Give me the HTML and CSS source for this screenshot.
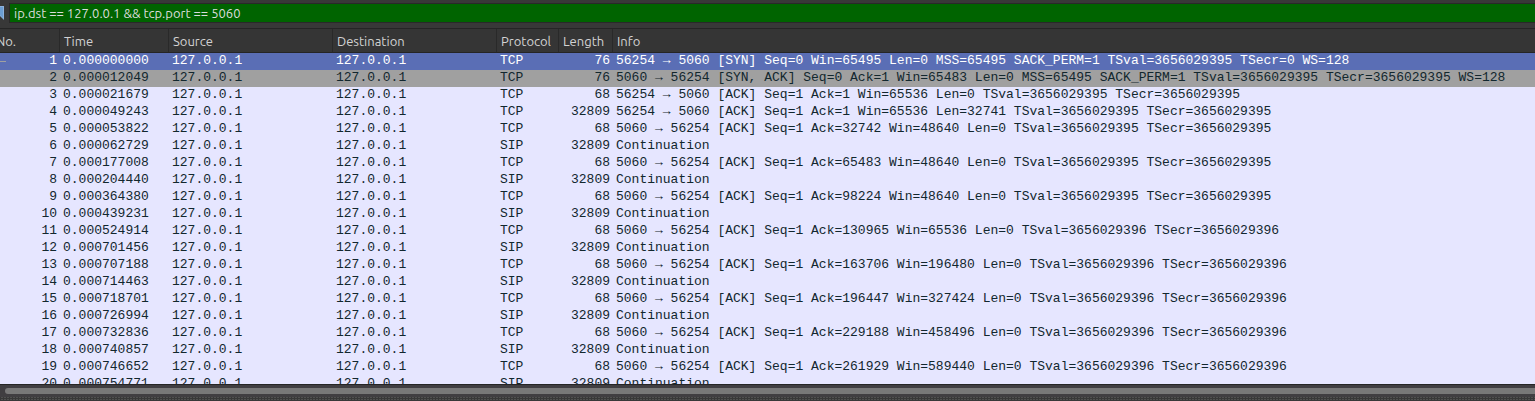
FILE: index.html
```
<!DOCTYPE html>
<html lang="en">
<head>
<meta charset="utf-8">
<title>Packet list</title>
<link rel="stylesheet" href="styles.css">
</head>
<body>
<form class="filter-bar">
  <button class="bookmark" type="button" aria-label="Filter bookmarks"><svg width="5" height="14" viewBox="0 0 5 14"><path d="M0 0H4V14L0 10Z" fill="#8db3dd"/><path d="M0 1H3V12L0 9Z" fill="#6c9fd3"/></svg></button>
  <input class="filter-input" type="text" aria-label="Display filter" spellcheck="false" value="ip.dst == 127.0.0.1 &amp;&amp; tcp.port == 5060">
</form>
<main class="packet-pane">
  <table class="packets">
    <colgroup><col class="c-no"><col class="c-time"><col class="c-addr"><col class="c-addr"><col class="c-proto"><col class="c-len"><col></colgroup>
    <thead><tr><th>No.</th><th>Time</th><th>Source</th><th>Destination</th><th>Protocol</th><th>Length</th><th>Info</th></tr></thead>
    <tbody id="rows"></tbody>
  </table>
</main>
<div class="scroll-track"><div class="scroll-thumb"></div></div>
<div class="splitter"></div>
<script src="packets.js"></script>
</body>
</html>
```
FILE: styles.css
```
* { box-sizing: border-box; }
body {
  margin: 0;
  height: 100vh;
  display: flex;
  flex-direction: column;
  overflow: hidden;
  background: #383838;
  color: #d3d3d3;
  font-family: Ubuntu, "Noto Sans", sans-serif;
  font-size: 13px;
}
.filter-bar {
  flex: none;
  display: flex;
  height: 28px;
  padding: 3px 0 5px;
}
.bookmark {
  display: flex;
  align-items: center;
  width: 10px;
  padding: 0;
  border: 0;
  border-right: 1px solid #292929;
  background: #383838;
}
.filter-input {
  flex: 1;
  min-width: 0;
  padding: 0 4px;
  border: solid #292929;
  border-width: 1px 0;
  border-radius: 0;
  outline: 0;
  background: #006400;
  color: #dcdcdc;
  font: inherit;
  font-family: Ubuntu, Roboto, sans-serif;
}
.packet-pane {
  flex: 1;
  min-height: 0;
  overflow: hidden;
  border-top: 1px solid #252525;
  border-bottom: 1px solid #252525;
  background: #e6e6ff;
}
.packets {
  width: calc(100% + 8px);
  margin-left: -8px;
  table-layout: fixed;
  border-collapse: separate;
  border-spacing: 0;
}
.c-no { width: 68px; }
.c-time { width: 109px; }
.c-addr { width: 164px; }
.c-proto { width: 62px; }
.c-len { width: 54px; }
.packets th {
  height: 24px;
  padding: 1px 0 0 4px;
  border-right: 1px solid #292929;
  border-bottom: 1px solid #252525;
  background: #353535;
  font-weight: 400;
  line-height: 22px;
  text-align: left;
  white-space: nowrap;
}
.packets th:last-child { border-right: 0; }
.packets td {
  height: 17px;
  padding: 0 3px;
  color: #12272e;
  font: 13px/16px "Liberation Mono", monospace;
  vertical-align: top;
  white-space: pre;
}
.packets .num { text-align: right; }
.packets .selected td { background-color: #5a6eb5; color: #fff; }
.packets .syn-ack td { background-color: #a0a0a0; }
.packets .selected td:first-child {
  background-image: linear-gradient(#a0a0a0, #a0a0a0);
  background-repeat: no-repeat;
  background-position: 8px 8px;
  background-size: 6px 1px;
}
.scroll-track {
  flex: none;
  height: 12px;
  padding: 3px 0 3px 5px;
  background: #403e41;
}
.scroll-thumb {
  height: 6px;
  border-radius: 3px 0 0 3px;
  background: #787878;
}
.splitter {
  flex: none;
  height: 4px;
  background: #383838 conic-gradient(from 90deg at 1px 1px, transparent 75%, #505050 0) 0 2px / 3px 2px;
}
```
FILE: packets.js
```
const packets = [
  ["0.000000000", "TCP", 76, "56254 → 5060 [SYN] Seq=0 Win=65495 Len=0 MSS=65495 SACK_PERM=1 TSval=3656029395 TSecr=0 WS=128"],
  ["0.000012049", "TCP", 76, "5060 → 56254 [SYN, ACK] Seq=0 Ack=1 Win=65483 Len=0 MSS=65495 SACK_PERM=1 TSval=3656029395 TSecr=3656029395 WS=128"],
  ["0.000021679", "TCP", 68, "56254 → 5060 [ACK] Seq=1 Ack=1 Win=65536 Len=0 TSval=3656029395 TSecr=3656029395"],
  ["0.000049243", "TCP", 32809, "56254 → 5060 [ACK] Seq=1 Ack=1 Win=65536 Len=32741 TSval=3656029395 TSecr=3656029395"],
  ["0.000053822", "TCP", 68, "5060 → 56254 [ACK] Seq=1 Ack=32742 Win=48640 Len=0 TSval=3656029395 TSecr=3656029395"],
  ["0.000062729", "SIP", 32809, "Continuation"],
  ["0.000177008", "TCP", 68, "5060 → 56254 [ACK] Seq=1 Ack=65483 Win=48640 Len=0 TSval=3656029395 TSecr=3656029395"],
  ["0.000204440", "SIP", 32809, "Continuation"],
  ["0.000364380", "TCP", 68, "5060 → 56254 [ACK] Seq=1 Ack=98224 Win=48640 Len=0 TSval=3656029395 TSecr=3656029395"],
  ["0.000439231", "SIP", 32809, "Continuation"],
  ["0.000524914", "TCP", 68, "5060 → 56254 [ACK] Seq=1 Ack=130965 Win=65536 Len=0 TSval=3656029396 TSecr=3656029396"],
  ["0.000701456", "SIP", 32809, "Continuation"],
  ["0.000707188", "TCP", 68, "5060 → 56254 [ACK] Seq=1 Ack=163706 Win=196480 Len=0 TSval=3656029396 TSecr=3656029396"],
  ["0.000714463", "SIP", 32809, "Continuation"],
  ["0.000718701", "TCP", 68, "5060 → 56254 [ACK] Seq=1 Ack=196447 Win=327424 Len=0 TSval=3656029396 TSecr=3656029396"],
  ["0.000726994", "SIP", 32809, "Continuation"],
  ["0.000732836", "TCP", 68, "5060 → 56254 [ACK] Seq=1 Ack=229188 Win=458496 Len=0 TSval=3656029396 TSecr=3656029396"],
  ["0.000740857", "SIP", 32809, "Continuation"],
  ["0.000746652", "TCP", 68, "5060 → 56254 [ACK] Seq=1 Ack=261929 Win=589440 Len=0 TSval=3656029396 TSecr=3656029396"],
  ["0.000754771", "SIP", 32809, "Continuation"]
];
const body = document.getElementById("rows");
packets.forEach(([time, protocol, length, info], i) => {
  const row = body.insertRow();
  if (i === 0) row.className = "selected";
  if (i === 1) row.className = "syn-ack";
  [i + 1, time, "127.0.0.1", "127.0.0.1", protocol, length, info].forEach((value, column) => {
    const cell = row.insertCell();
    cell.textContent = value;
    if (column === 0 || column === 5) cell.className = "num";
  });
});
```
